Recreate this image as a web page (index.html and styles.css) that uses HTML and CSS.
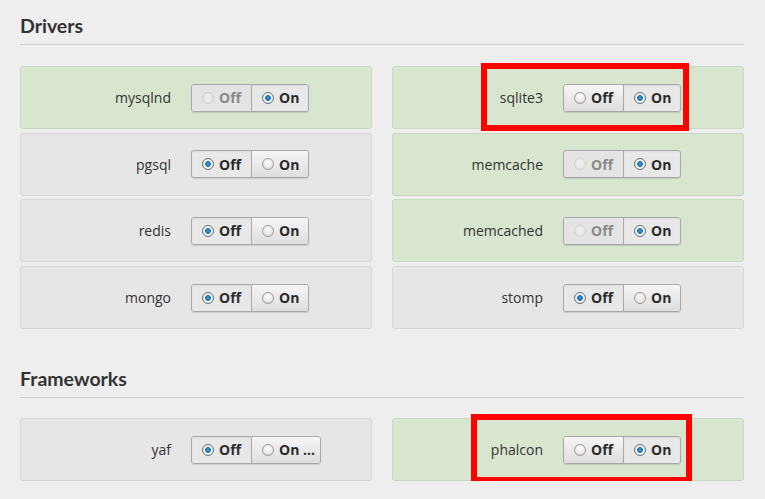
FILE: index.html
```html
<!DOCTYPE html>
<html>
<head>
<meta charset="utf-8">
<link rel="stylesheet" href="styles.css">
</head>
<body>
<div class="page">
  <section class="section">
    <h2 class="title">Drivers</h2>
    <div class="grid">
      <div class="card on">
        <span class="label">mysqlnd</span>
        <div class="toggle">
          <span class="btn disabled"><i class="radio"></i>Off</span>
          <span class="btn active"><i class="radio checked"></i>On</span>
        </div>
      </div>
      <div class="card on">
        <span class="label">sqlite3</span>
        <div class="toggle">
          <span class="btn"><i class="radio"></i>Off</span>
          <span class="btn active"><i class="radio checked"></i>On</span>
        </div>
        <div class="mark mark-sqlite"></div>
      </div>
      <div class="card">
        <span class="label">pgsql</span>
        <div class="toggle">
          <span class="btn active"><i class="radio checked"></i>Off</span>
          <span class="btn"><i class="radio"></i>On</span>
        </div>
      </div>
      <div class="card on">
        <span class="label">memcache</span>
        <div class="toggle">
          <span class="btn disabled"><i class="radio"></i>Off</span>
          <span class="btn active"><i class="radio checked"></i>On</span>
        </div>
      </div>
      <div class="card">
        <span class="label">redis</span>
        <div class="toggle">
          <span class="btn active"><i class="radio checked"></i>Off</span>
          <span class="btn"><i class="radio"></i>On</span>
        </div>
      </div>
      <div class="card on">
        <span class="label">memcached</span>
        <div class="toggle">
          <span class="btn disabled"><i class="radio"></i>Off</span>
          <span class="btn active"><i class="radio checked"></i>On</span>
        </div>
      </div>
      <div class="card">
        <span class="label">mongo</span>
        <div class="toggle">
          <span class="btn active"><i class="radio checked"></i>Off</span>
          <span class="btn"><i class="radio"></i>On</span>
        </div>
      </div>
      <div class="card">
        <span class="label">stomp</span>
        <div class="toggle">
          <span class="btn active"><i class="radio checked"></i>Off</span>
          <span class="btn"><i class="radio"></i>On</span>
        </div>
      </div>
    </div>
  </section>
  <section class="section second">
    <h2 class="title">Frameworks</h2>
    <div class="grid grid2">
      <div class="card">
        <span class="label">yaf</span>
        <div class="toggle">
          <span class="btn active"><i class="radio checked"></i>Off</span>
          <span class="btn wide"><i class="radio"></i>On ...</span>
        </div>
      </div>
      <div class="card on">
        <span class="label">phalcon</span>
        <div class="toggle">
          <span class="btn"><i class="radio"></i>Off</span>
          <span class="btn active"><i class="radio checked"></i>On</span>
        </div>
        <div class="mark mark-phalcon"></div>
      </div>
    </div>
  </section>
</div>
</body>
</html>
```

FILE: styles.css
```css
html, body {
  margin: 0;
  padding: 0;
  background: #eeeeee;
}
.page {
  padding: 0 21px 0 20px;
  font-family: "Open Sans", "Liberation Sans", sans-serif;
  color: #333;
}
.section {
  padding-top: 0;
}
.second {
  margin-top: 24px;
}
.title {
  margin: 0;
  font-family: Lato, "Open Sans", sans-serif;
  font-size: 19.5px;
  line-height: 24px;
  font-weight: 700;
  color: #333;
  padding-top: 14px;
  padding-bottom: 6px;
  border-bottom: 1px solid #cfcfcf;
}
.grid {
  margin-top: 21px;
  display: grid;
  grid-template-columns: 352px 352px;
  column-gap: 20px;
  row-gap: 3.7px;
}
.grid2 {
  margin-top: 20px;
}
.card {
  position: relative;
  height: 61px;
  border: 1px solid #d6d6d6;
  border-radius: 3px;
  background: #e6e6e6;
  display: flex;
  align-items: center;
}
.card.on {
  background: #d8e6d0;
  border-color: #c9d8c1;
}
.label {
  width: 150px;
  text-align: right;
  font-size: 14px;
  color: #333;
  margin-right: 20px;
}
.toggle {
  display: flex;
  height: 28px;
  box-sizing: border-box;
  border: 1px solid #a9a9a9;
  border-radius: 3px;
  box-shadow: 0 1px 1px rgba(0,0,0,0.12);
  overflow: hidden;
}
.btn {
  display: flex;
  align-items: center;
  box-sizing: border-box;
  width: 59px;
  padding-left: 10px;
  font-size: 14px;
  font-weight: 700;
  color: #2b2b2b;
  background: linear-gradient(#f6f6f6, #dedede);
}
.btn + .btn {
  border-left: 1px solid #a9a9a9;
  width: 57px;
}
.btn.wide {
  width: 69px;
}
.btn.active {
  background: #e8e8e8;
  box-shadow: inset 0 1px 2px rgba(0,0,0,0.06);
}
.btn.disabled {
  background: #e4e4e4;
  color: #8a8a8a;
}
.radio {
  display: inline-block;
  box-sizing: border-box;
  width: 12px;
  height: 12px;
  border-radius: 50%;
  border: 1px solid #9a9a9a;
  background: radial-gradient(circle at 50% 35%, #ffffff, #d8d8d8);
  margin-right: 5px;
  position: relative;
}
.radio.checked {
  border-color: #5f6f7a;
  background: radial-gradient(circle, #3aa0e0 0, #1a6fa8 2.6px, #ffffff 3.2px, #dcdcdc 6px);
}
.btn.disabled .radio {
  border-color: #cfcfcf;
  background: radial-gradient(circle at 50% 35%, #f0f0f0, #e2e2e2);
}
.mark {
  position: absolute;
  border: 6px solid #ff0000;
  box-sizing: border-box;
}
.mark-sqlite {
  left: 88px;
  top: -4px;
  width: 208px;
  height: 68px;
}
.mark-phalcon {
  left: 78px;
  top: -5px;
  width: 221px;
  height: 69px;
}
```
